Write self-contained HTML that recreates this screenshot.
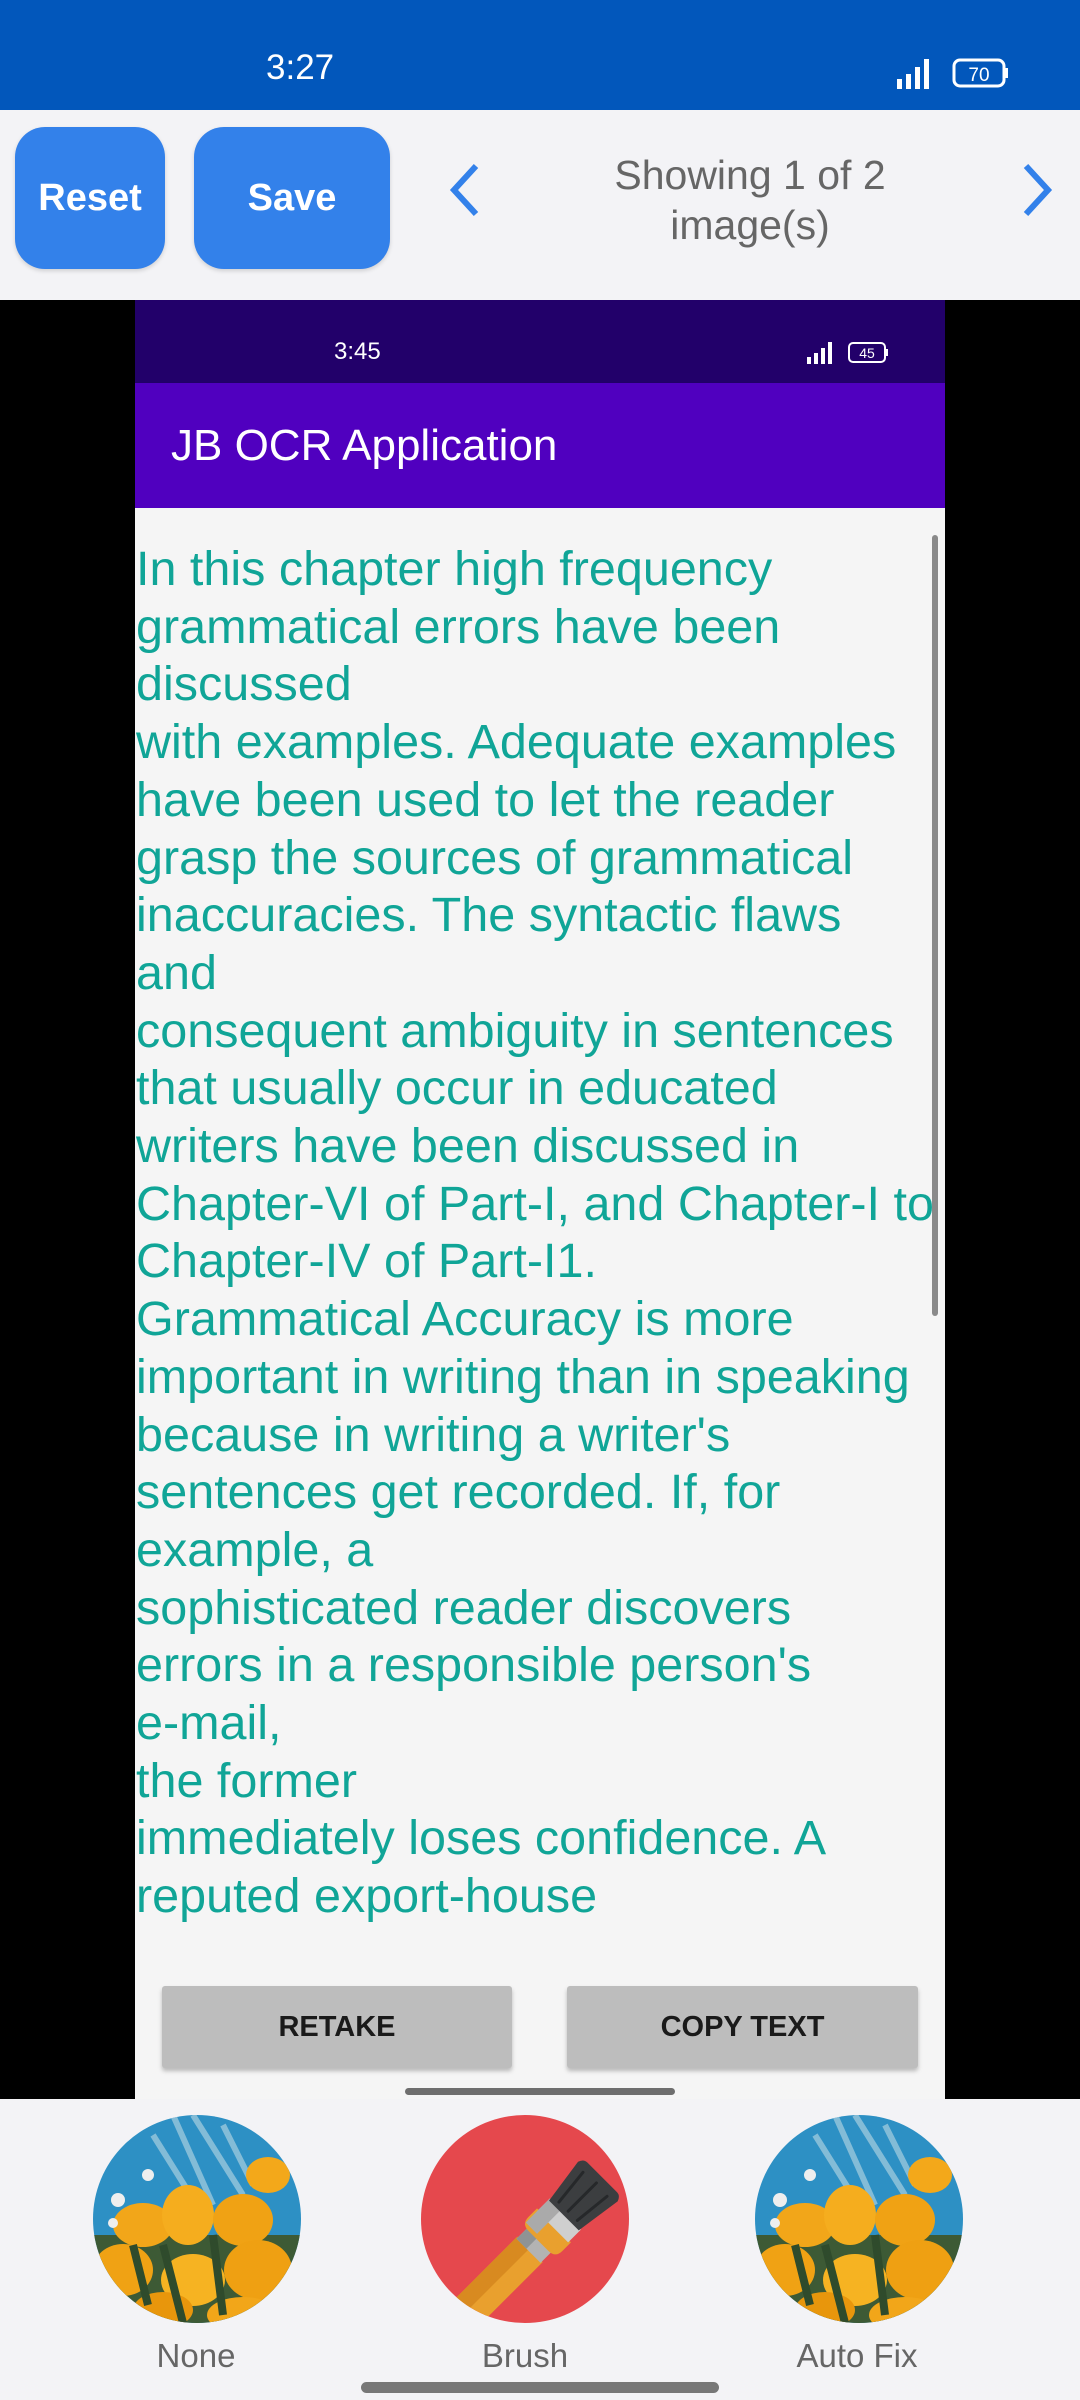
<!DOCTYPE html>
<html><head><meta charset="utf-8">
<style>
*{margin:0;padding:0;box-sizing:border-box}
body{width:1080px;height:2400px;overflow:hidden;background:#f3f3f6;font-family:"Liberation Sans",Roboto,sans-serif;position:relative}
.abs{position:absolute}
.sb{left:0;top:0;width:1080px;height:110px;background:#0257bb}
.btn{background:#3381ea;border-radius:30px;color:#fff;font-weight:bold;font-size:38px;display:flex;align-items:center;justify-content:center;box-shadow:0 2px 4px rgba(0,0,0,.15)}
.txt{left:136px;top:541px;width:809px;height:1394px;overflow:hidden;color:#10a597;font-size:48.5px;line-height:57.7px;white-space:nowrap}
.gbtn{background:#bdbdbd;height:82px;top:1986px;font-size:29px;font-weight:bold;color:#1a1a1a;display:flex;align-items:center;justify-content:center;border-radius:3px;box-shadow:0 3px 4px rgba(0,0,0,.25)}
.lbl{font-size:33px;color:#666;top:2337px;width:300px;text-align:center}
</style></head><body>
<div class="abs sb"></div>
<div class="abs" style="left:266px;top:48px;font-size:35px;color:#fff">3:27</div>
<svg class="abs" style="left:895px;top:55px" width="120" height="36" viewBox="0 0 120 36">
<rect x="2" y="24" width="5" height="10" fill="#fff"/><rect x="11" y="19" width="5" height="15" fill="#fff"/><rect x="20" y="12" width="5" height="22" fill="#fff"/><rect x="29" y="4" width="5" height="30" fill="#fff"/>
<rect x="59" y="5" width="50" height="26" rx="6" fill="none" stroke="#fff" stroke-width="3"/><rect x="110" y="13" width="3" height="10" fill="#fff"/>
<text x="84" y="26" font-size="19" fill="#fff" text-anchor="middle" font-family="Liberation Sans">70</text></svg>

<div class="abs btn" style="left:15px;top:127px;width:150px;height:142px">Reset</div>
<div class="abs btn" style="left:194px;top:127px;width:196px;height:142px">Save</div>
<svg class="abs" style="left:440px;top:160px" width="50" height="60" viewBox="0 0 50 60"><path d="M36 6 L14 30 L36 54" fill="none" stroke="#3381ea" stroke-width="6"/></svg>
<svg class="abs" style="left:1012px;top:160px" width="50" height="60" viewBox="0 0 50 60"><path d="M14 6 L36 30 L14 54" fill="none" stroke="#3381ea" stroke-width="6"/></svg>
<div class="abs" style="left:550px;top:150px;width:400px;text-align:center;font-size:41px;line-height:50px;color:#666">Showing 1 of 2<br>image(s)</div>

<div class="abs" style="left:0;top:300px;width:1080px;height:1799px;background:#000"></div>
<div class="abs" style="left:135px;top:300px;width:810px;height:83px;background:#22006a"></div>
<div class="abs" style="left:334px;top:338px;font-size:24px;color:#fff">3:45</div>
<svg class="abs" style="left:805px;top:340px" width="90" height="26" viewBox="0 0 90 26">
<rect x="2" y="17" width="4" height="7" fill="#fff"/><rect x="9" y="13" width="4" height="11" fill="#fff"/><rect x="16" y="8" width="4" height="16" fill="#fff"/><rect x="23" y="2" width="4" height="22" fill="#fff"/>
<rect x="44" y="3" width="36" height="19" rx="4" fill="none" stroke="#fff" stroke-width="2"/><rect x="81" y="9" width="2" height="7" fill="#fff"/>
<text x="62" y="18" font-size="14" fill="#fff" text-anchor="middle" font-family="Liberation Sans">45</text></svg>
<div class="abs" style="left:135px;top:383px;width:810px;height:125px;background:#5000bf;box-shadow:0 2px 3px rgba(0,0,0,.3)"></div>
<div class="abs" style="left:171px;top:421px;font-size:44px;color:#fff">JB OCR Application</div>
<div class="abs" style="left:135px;top:508px;width:810px;height:1591px;background:#f5f5f5"></div>
<div class="abs txt">In this chapter high frequency<br>grammatical errors have been<br>discussed<br>with examples. Adequate examples<br>have been used to let the reader<br>grasp the sources of grammatical<br>inaccuracies. The syntactic flaws<br>and<br>consequent ambiguity in sentences<br>that usually occur in educated<br>writers have been discussed in<br>Chapter-VI of Part-I, and Chapter-I to<br>Chapter-IV of Part-I1.<br>Grammatical Accuracy is more<br>important in writing than in speaking<br>because in writing a writer's<br>sentences get recorded. If, for<br>example, a<br>sophisticated reader discovers<br>errors in a responsible person's<br>e-mail,<br>the former<br>immediately loses confidence. A<br>reputed export-house<br>people were warned of a fault</div>
<div class="abs" style="left:932px;top:535px;width:6px;height:781px;background:#8a8a8a;border-radius:3px"></div>
<div class="abs gbtn" style="left:162px;width:350px">RETAKE</div>
<div class="abs gbtn" style="left:567px;width:351px">COPY TEXT</div>
<div class="abs" style="left:405px;top:2088px;width:270px;height:7px;background:#6e6e6e;border-radius:4px"></div>

<svg class="abs" style="left:93px;top:2115px" width="208" height="208" viewBox="0 0 208 208">
<defs><clipPath id="f1"><circle cx="104" cy="104" r="104"/></clipPath></defs>
<g clip-path="url(#f1)">
<rect width="208" height="208" fill="#2d90c4"/>
<path d="M80 0 L120 90 M100 0 L150 80 M60 20 L110 100 M130 10 L160 70" stroke="#a8cfe0" stroke-width="6" opacity=".7"/>
<rect y="120" width="208" height="88" fill="#3d5a35"/>
<ellipse cx="50" cy="110" rx="30" ry="22" fill="#f2a619"/>
<ellipse cx="95" cy="100" rx="26" ry="30" fill="#f5ad1e"/>
<ellipse cx="150" cy="105" rx="30" ry="26" fill="#f0a214"/>
<ellipse cx="175" cy="60" rx="22" ry="18" fill="#f3a81a"/>
<ellipse cx="30" cy="155" rx="30" ry="26" fill="#f0a214"/>
<ellipse cx="100" cy="165" rx="32" ry="26" fill="#f6b322"/>
<ellipse cx="165" cy="155" rx="34" ry="30" fill="#efa012"/>
<ellipse cx="70" cy="195" rx="30" ry="18" fill="#e8960c"/>
<ellipse cx="150" cy="200" rx="36" ry="18" fill="#f2a619"/>
<path d="M70 130 L90 208 M120 120 L130 200 M40 130 L55 190" stroke="#2f4b2c" stroke-width="8"/>
<circle cx="25" cy="85" r="7" fill="#eee"/><circle cx="55" cy="60" r="6" fill="#eee"/><circle cx="20" cy="108" r="5" fill="#eee"/>
</g></svg>
<svg class="abs" style="left:755px;top:2115px" width="208" height="208" viewBox="0 0 208 208">
<defs><clipPath id="f2"><circle cx="104" cy="104" r="104"/></clipPath></defs>
<g clip-path="url(#f2)">
<rect width="208" height="208" fill="#2d90c4"/>
<path d="M80 0 L120 90 M100 0 L150 80 M60 20 L110 100 M130 10 L160 70" stroke="#a8cfe0" stroke-width="6" opacity=".7"/>
<rect y="120" width="208" height="88" fill="#3d5a35"/>
<ellipse cx="50" cy="110" rx="30" ry="22" fill="#f2a619"/>
<ellipse cx="95" cy="100" rx="26" ry="30" fill="#f5ad1e"/>
<ellipse cx="150" cy="105" rx="30" ry="26" fill="#f0a214"/>
<ellipse cx="175" cy="60" rx="22" ry="18" fill="#f3a81a"/>
<ellipse cx="30" cy="155" rx="30" ry="26" fill="#f0a214"/>
<ellipse cx="100" cy="165" rx="32" ry="26" fill="#f6b322"/>
<ellipse cx="165" cy="155" rx="34" ry="30" fill="#efa012"/>
<ellipse cx="70" cy="195" rx="30" ry="18" fill="#e8960c"/>
<ellipse cx="150" cy="200" rx="36" ry="18" fill="#f2a619"/>
<path d="M70 130 L90 208 M120 120 L130 200 M40 130 L55 190" stroke="#2f4b2c" stroke-width="8"/>
<circle cx="25" cy="85" r="7" fill="#eee"/><circle cx="55" cy="60" r="6" fill="#eee"/><circle cx="20" cy="108" r="5" fill="#eee"/>
</g></svg>

<svg class="abs" style="left:421px;top:2115px" width="208" height="208" viewBox="0 0 208 208">
<defs><clipPath id="c"><circle cx="104" cy="104" r="104"/></clipPath></defs>
<circle cx="104" cy="104" r="104" fill="#e5484d"/>
<g clip-path="url(#c)" transform="rotate(45 104 104)">
<rect x="111" y="122" width="36" height="140" fill="#e9a02e"/>
<rect x="111" y="122" width="17" height="140" fill="#d88a20"/>
<rect x="112" y="104" width="34" height="20" fill="#b3b3b3"/>
<rect x="112" y="104" width="14" height="20" fill="#8f9394"/>
<path d="M105 88 L153 88 L153 100 Q153 110 143 110 L115 110 Q105 110 105 100 Z" fill="#e9a02e"/>
<rect x="107" y="72" width="44" height="18" fill="#cfcfcf"/>
<rect x="107" y="72" width="16" height="34" fill="#aaa"/>
<path d="M108 74 L150 74 L157 26 Q155 20 150 20 L108 20 Q103 20 101 26 Z" fill="#3c3e40"/>
<path d="M116 68 L112 30 M129 68 L129 28 M142 68 L146 30" stroke="#26282a" stroke-width="3" stroke-linecap="round"/>
</g></svg>
<div class="abs lbl" style="left:46px">None</div>
<div class="abs lbl" style="left:375px">Brush</div>
<div class="abs lbl" style="left:707px">Auto Fix</div>
<div class="abs" style="left:361px;top:2382px;width:358px;height:11px;background:#777;border-radius:6px"></div>
</body></html>
